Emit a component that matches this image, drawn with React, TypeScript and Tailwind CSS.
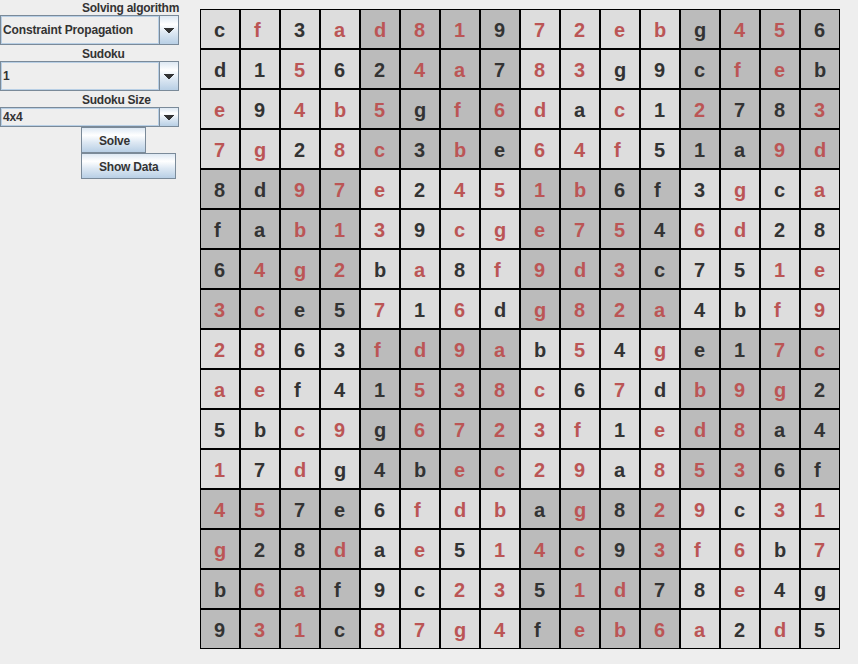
const ROWS = [
  "c f* 3 a* d* 8* 1* 9 7* 2* e* b* g 4* 5* 6",
  "d 1 5* 6 2 4* a* 7 8* 3* g 9 c f* e* b",
  "e* 9 4* b* 5* g f* 6* d* a c* 1 2* 7 8 3*",
  "7* g* 2 8* c* 3 b* e 6* 4* f* 5 1 a 9* d*",
  "8 d 9* 7* e* 2 4* 5* 1* b* 6 f 3 g* c a*",
  "f a b* 1* 3* 9 c* g* e* 7* 5* 4 6* d* 2 8",
  "6 4* g* 2* b a* 8 f* 9* d* 3* c 7 5 1* e*",
  "3* c* e 5 7* 1 6* d g* 8* 2* a* 4 b f* 9*",
  "2* 8* 6 3 f* d* 9* a* b 5* 4 g* e 1 7* c*",
  "a* e* f 4 1 5* 3* 8* c* 6 7* d b* 9* g* 2",
  "5 b c* 9* g 6* 7* 2* 3* f* 1 e* d* 8* a 4",
  "1* 7 d* g 4 b e* c* 2* 9* a 8* 5* 3* 6 f",
  "4* 5* 7 e 6 f* d* b* a g* 8 2* 9* c 3* 1*",
  "g* 2 8 d* a e* 5 1* 4* c* 9 3* f* 6* b 7*",
  "b 6* a* f 9 c 2* 3* 5 1* d* 7 8 e* 4 g",
  "9 3* 1* c 8* 7* g* 4* f e* b* 6* a* 2 d* 5",
].map((row) => row.split(" "));

const METAL =
  "bg-[linear-gradient(to_bottom,#dde8f3_0%,#ffffff_30%,#dde8f3_60%,#b8cfe5_100%)]";

function Label({ text, className = "h-4 pt-px" }: { text: string; className?: string }) {
  return (
    <div className={`pl-[82px] leading-[16px] tracking-[-0.25px] whitespace-nowrap ${className}`}>
      {text}
    </div>
  );
}

function Combo({ value, className }: { value: string; className: string }) {
  return (
    <div className={`flex w-[179px] border border-[#7a8a99] ${className}`}>
      <div className="flex flex-1 items-center border border-[#b8cfe5] pl-px tracking-[-0.15px] whitespace-nowrap">
        {value}
      </div>
      <div className={`flex w-[19px] items-center justify-center border-l border-[#7a8a99] ${METAL}`}>
        <svg width="10" height="5" viewBox="0 0 10 5" shapeRendering="crispEdges">
          <path d="M0 0h10v1h-1v1h-1v1h-1v1h-1v1h-2v-1h-1v-1h-1v-1h-1v-1h-1z" fill="#333" />
        </svg>
      </div>
    </div>
  );
}

function Button({ text, className }: { text: string; className: string }) {
  return (
    <button
      className={`ml-[81px] flex h-[26px] items-center border border-[#7a8a99] pt-[2px] pl-[17px] font-bold tracking-[-0.2px] whitespace-nowrap ${METAL} ${className}`}
    >
      {text}
    </button>
  );
}

export default function App() {
  return (
    <div className="flex h-[664px] w-[858px] overflow-hidden bg-[#eeeeee] font-['Liberation_Sans',Arial,sans-serif] text-[12px] font-bold text-[#333333]">
      <div className="w-[200px] shrink-0">
        <Label text="Solving algorithm" className="h-[15px]" />
        <Combo value="Constraint Propagation" className="h-[30px]" />
        <Label text="Sudoku" />
        <Combo value="1" className="h-[30px]" />
        <Label text="Sudoku Size" />
        <Combo value="4x4" className="h-[20px]" />
        <Button text="Solve" className="w-[65px]" />
        <Button text="Show Data" className="w-[95px]" />
      </div>
      <div className="mt-[9px] grid h-[640px] w-[640px] grid-cols-16 grid-rows-16">
        {ROWS.map((row, r) =>
          row.map((cell, c) => {
            const shaded = (Math.floor(r / 4) + Math.floor(c / 4)) % 2 === 1;
            const solved = cell.endsWith("*");
            return (
              <div
                key={`${r}-${c}`}
                className={`flex items-center border border-black pt-[2px] pl-[13px] text-[20px] leading-none ${
                  shaded ? "bg-[#bbbbbb]" : "bg-[#dddddd]"
                } ${solved ? "text-[#bb5555]" : "text-[#333333]"}`}
              >
                {cell[0]}
              </div>
            );
          }),
        )}
      </div>
    </div>
  );
}
